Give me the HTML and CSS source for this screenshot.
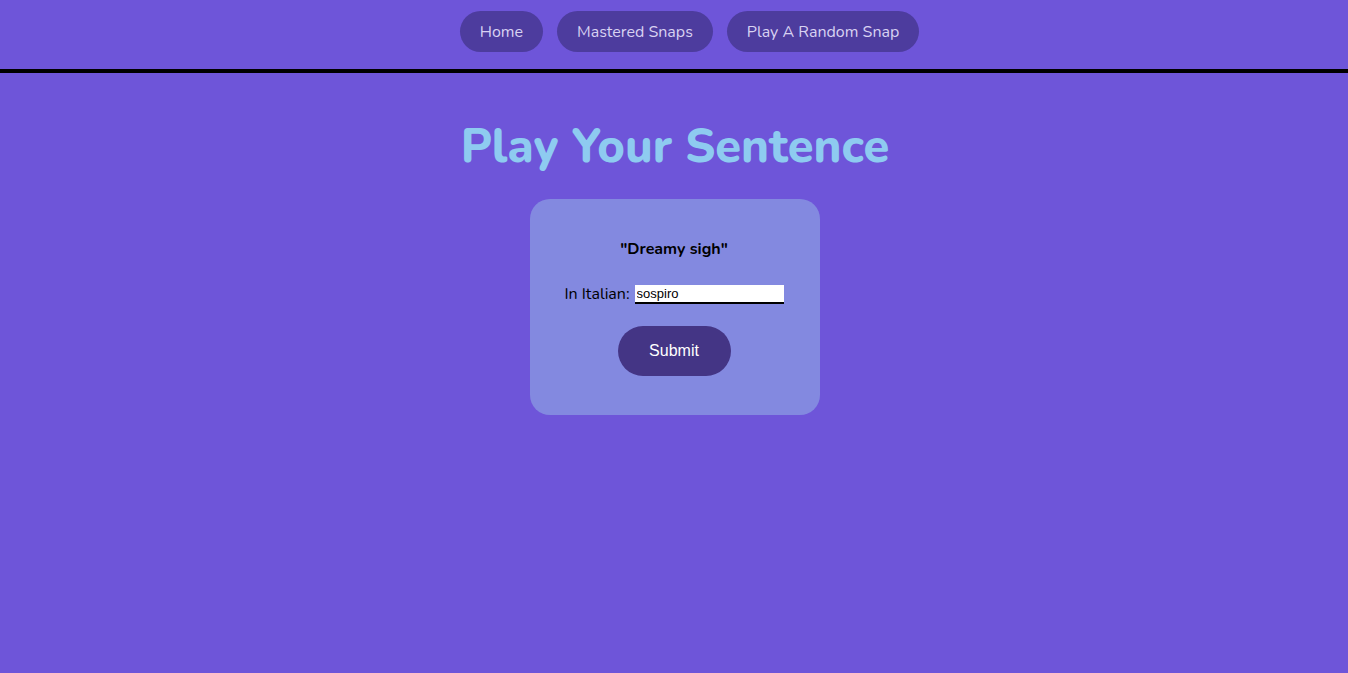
FILE: index.html
```html
<!DOCTYPE html>
<html>
<head>
<meta charset="utf-8">
<link rel="stylesheet" href="styles.css">
</head>
<body>
<nav class="nav">
  <a class="nav-btn" href="#">Home</a>
  <a class="nav-btn" href="#">Mastered Snaps</a>
  <a class="nav-btn" href="#">Play A Random Snap</a>
</nav>
<main class="main">
  <h1 class="title">Play Your Sentence</h1>
  <form class="card">
    <p class="phrase">"Dreamy sigh"</p>
    <label class="field">In Italian: <input class="answer" type="text" value="sospiro"></label>
    <button class="submit" type="button">Submit</button>
  </form>
</main>
</body>
</html>
```
FILE: styles.css
```css
html, body {
  margin: 0;
  padding: 0;
  background: #6e55d9;
  height: 100%;
}
body {
  font-family: "Nunito", "Lato", "Noto Sans", sans-serif;
}
.nav {
  display: flex;
  justify-content: center;
  gap: 14px;
  padding: 11px 0 17px 31px;
  border-bottom: 4px solid #000;
}
.nav-btn {
  display: flex;
  align-items: center;
  height: 41px;
  padding: 0 20px;
  border-radius: 21px;
  background: #4d3c9e;
  color: #d8d2f2;
  text-decoration: none;
  font-size: 16px;
}
.main {
  display: flex;
  flex-direction: column;
  align-items: center;
  padding-left: 2px;
}
.title {
  margin: 42px 0 20px;
  font-size: 47px;
  line-height: 64px;
  color: #8ecbf0;
  font-weight: 800;
}
.card {
  width: 290px;
  box-sizing: border-box;
  background: #8389e0;
  border-radius: 20px;
  padding: 40px 2px 39px 0;
  display: flex;
  flex-direction: column;
  align-items: center;
  margin: 0;
}
.phrase {
  margin: 0;
  font-weight: 700;
  font-size: 16px;
  line-height: 20px;
  color: #000;
}
.field {
  margin-top: 25px;
  font-size: 16px;
  line-height: 20px;
  color: #000;
  display: flex;
  align-items: center;
  gap: 5px;
}
.answer {
  width: 149px;
  height: 19px;
  box-sizing: border-box;
  border: none;
  border-bottom: 2px solid #000;
  padding: 0 2px;
  margin: 0;
  font-family: "Liberation Sans", Arial, sans-serif;
  font-size: 13px;
  background: #fff;
  outline: none;
}
.submit {
  margin-top: 22px;
  width: 113px;
  height: 50px;
  border: none;
  border-radius: 25px;
  background: #443585;
  color: #fff;
  font-family: "Liberation Sans", Arial, sans-serif;
  font-size: 16px;
}
```
